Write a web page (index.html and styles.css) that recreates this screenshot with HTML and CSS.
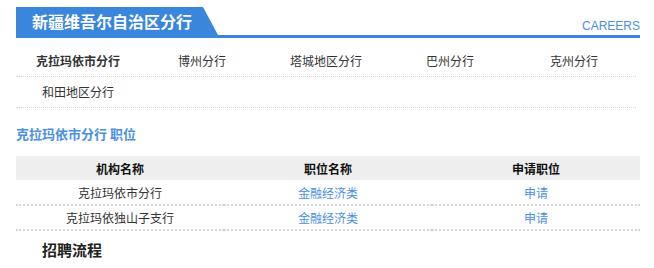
FILE: index.html
```html
<!DOCTYPE html>
<html lang="zh-CN">
<head>
    <meta charset="UTF-8">
    <meta name="viewport" content="width=device-width, initial-scale=1.0">
    <title>新疆维吾尔自治区分行</title>
    <link rel="stylesheet" href="styles.css">
</head>
<body>
    <div class="wrap">
        <div class="header">
            <div class="tab-title">新疆维吾尔自治区分行</div>
            <div class="careers">CAREERS</div>
        </div>

        <div class="branches">
            <div class="branch-row">
                <a class="branch active">克拉玛依市分行</a>
                <a class="branch">博州分行</a>
                <a class="branch">塔城地区分行</a>
                <a class="branch">巴州分行</a>
                <a class="branch">克州分行</a>
            </div>
            <div class="branch-row">
                <a class="branch">和田地区分行</a>
            </div>
        </div>

        <h3 class="section-title">克拉玛依市分行 职位</h3>

        <table class="jobs">
            <thead>
                <tr>
                    <th>机构名称</th>
                    <th>职位名称</th>
                    <th>申请职位</th>
                </tr>
            </thead>
            <tbody>
                <tr>
                    <td>克拉玛依市分行</td>
                    <td><a>金融经济类</a></td>
                    <td><a>申请</a></td>
                </tr>
                <tr>
                    <td>克拉玛依独山子支行</td>
                    <td><a>金融经济类</a></td>
                    <td><a>申请</a></td>
                </tr>
            </tbody>
        </table>

        <h4 class="process">招聘流程</h4>
    </div>
</body>
</html>
```

FILE: styles.css
```css
* {
    margin: 0;
    padding: 0;
    box-sizing: border-box;
}

:root {
    --blue: #3b86dd;
    --link: #4a8fe6;
    --text: #333333;
    --line: #d6d6d6;
}

body {
    background: #ffffff;
    color: var(--text);
    font-family: "Noto Sans CJK SC", "Noto Sans", sans-serif;
    font-size: 12px;
}

.wrap {
    margin: 7px 14px 0 16px;
}

.header {
    display: flex;
    justify-content: space-between;
    align-items: flex-end;
    border-bottom: 3px solid var(--blue);
}

.tab-title {
    width: 202px;
    height: 28px;
    line-height: 28px;
    padding-left: 16px;
    background: var(--blue);
    color: #ffffff;
    font-size: 16px;
    font-weight: 700;
    clip-path: polygon(0 0, 187px 0, 202px 28px, 0 28px);
}

.careers {
    font-family: "Liberation Sans", Arial, sans-serif;
    font-size: 12px;
    color: var(--link);
    line-height: 12px;
    padding-bottom: 3px;
}

.branches {
    margin-top: 8px;
}

.branch-row {
    display: flex;
    border-bottom: 1px dotted var(--line);
    margin-right: 4px;
}

.branch {
    width: 20%;
    height: 30px;
    line-height: 30px;
    text-align: center;
    color: var(--text);
    cursor: pointer;
}

.branch.active {
    font-weight: 700;
}

.section-title {
    margin-top: 17px;
    font-size: 13px;
    font-weight: 700;
    color: var(--link);
    line-height: 18px;
}

.jobs {
    width: 100%;
    margin-top: 13px;
    border-collapse: collapse;
    table-layout: fixed;
}

.jobs th {
    background: #eeeeee;
    height: 24px;
    font-weight: 700;
    color: #111111;
}

.jobs td {
    height: 25px;
    text-align: center;
    border-bottom: 2px dotted var(--line);
}

.jobs a {
    color: var(--link);
    cursor: pointer;
}

.process {
    margin: 8px 0 0 26px;
    font-size: 15px;
    font-weight: 700;
    color: #222222;
}
```
